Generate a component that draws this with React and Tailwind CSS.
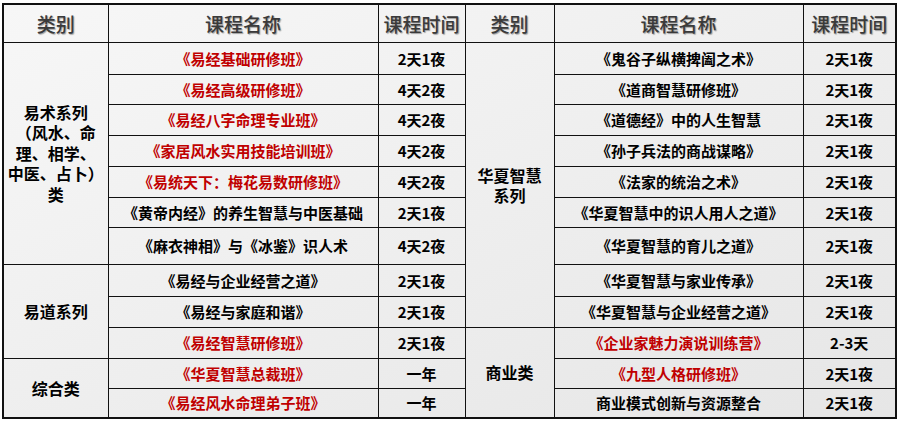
const rowHeights = [32, 30, 31, 31, 31, 30, 37, 32, 31, 31, 30, 30];

const left = [
  { name: "《易经基础研修班》", time: "2天1夜", red: true },
  { name: "《易经高级研修班》", time: "4天2夜", red: true },
  { name: "《易经八字命理专业班》", time: "4天2夜", red: true },
  { name: "《家居风水实用技能培训班》", time: "4天2夜", red: true },
  { name: "《易统天下：梅花易数研修班》", time: "4天2夜", red: true },
  { name: "《黄帝内经》的养生智慧与中医基础", time: "2天1夜" },
  { name: "《麻衣神相》与《冰鉴》识人术", time: "4天2夜" },
  { name: "《易经与企业经营之道》", time: "2天1夜" },
  { name: "《易经与家庭和谐》", time: "2天1夜" },
  { name: "《易经智慧研修班》", time: "2天1夜", red: true },
  { name: "《华夏智慧总裁班》", time: "一年", red: true },
  { name: "《易经风水命理弟子班》", time: "一年", red: true },
];

const right = [
  { name: "《鬼谷子纵横捭阖之术》", time: "2天1夜" },
  { name: "《道商智慧研修班》", time: "2天1夜" },
  { name: "《道德经》中的人生智慧", time: "2天1夜" },
  { name: "《孙子兵法的商战谋略》", time: "2天1夜" },
  { name: "《法家的统治之术》", time: "2天1夜" },
  { name: "《华夏智慧中的识人用人之道》", time: "2天1夜" },
  { name: "《华夏智慧的育儿之道》", time: "2天1夜" },
  { name: "《华夏智慧与家业传承》", time: "2天1夜" },
  { name: "《华夏智慧与企业经营之道》", time: "2天1夜" },
  { name: "《企业家魅力演说训练营》", time: "2-3天", red: true },
  { name: "《九型人格研修班》", time: "2天1夜", red: true },
  { name: "商业模式创新与资源整合", time: "2天1夜" },
];

// category cells: row index where they start -> [label, rowSpan]
const leftCats = {
  0: [<>易术系列<br />（风水、命<br />理、相学、<br />中医、占卜）<br />类</>, 7],
  7: [<>易道系列</>, 3],
  10: [<>综合类</>, 2],
};
const rightCats = {
  0: [<>华夏智慧<br />系列</>, 9],
  9: [<>商业类</>, 3],
};

const td = "border border-[#111] text-center align-middle p-0";
const th = "border border-[#111] text-center align-middle p-0 font-medium text-[19px] text-[#3a3a3a] [text-shadow:1px_1px_1px_rgba(0,0,0,0.35)]";

function Name({ item }) {
  return (
    <td className={`${td} text-[15px] font-bold ${item.red ? "text-[#c00000]" : "text-black"}`}>
      {item.name}
    </td>
  );
}

export default function App() {
  return (
    <div className="w-[898px] h-[425px] bg-white pl-[2px] pt-[3px] font-['Noto_Sans_CJK_SC',sans-serif]">
      <table className="table-fixed border-collapse border-2 border-[#111] w-[893px] bg-gradient-to-br from-[#f7f7f7] to-[#e6e6e6] leading-none">
        <colgroup>
          <col className="w-[105px]" />
          <col className="w-[270px]" />
          <col className="w-[87px]" />
          <col className="w-[89px]" />
          <col className="w-[249px]" />
          <col className="w-[93px]" />
        </colgroup>
        <thead>
          <tr className="h-[38px]">
            <th className={th}>类别</th>
            <th className={th}>课程名称</th>
            <th className={th}>课程时间</th>
            <th className={th}>类别</th>
            <th className={th}>课程名称</th>
            <th className={th}>课程时间</th>
          </tr>
        </thead>
        <tbody>
          {rowHeights.map((h, i) => (
            <tr key={i} style={{ height: h }}>
              {leftCats[i] && (
                <td rowSpan={leftCats[i][1]} className={`${td} text-[16px] font-bold leading-[20.5px] text-black`}>
                  {leftCats[i][0]}
                </td>
              )}
              <Name item={left[i]} />
              <td className={`${td} text-[15px] font-bold text-black`}>{left[i].time}</td>
              {rightCats[i] && (
                <td rowSpan={rightCats[i][1]} className={`${td} text-[16px] font-bold leading-[20px] text-black`}>
                  {rightCats[i][0]}
                </td>
              )}
              <Name item={right[i]} />
              <td className={`${td} text-[15px] font-bold text-black`}>{right[i].time}</td>
            </tr>
          ))}
        </tbody>
      </table>
    </div>
  );
}
